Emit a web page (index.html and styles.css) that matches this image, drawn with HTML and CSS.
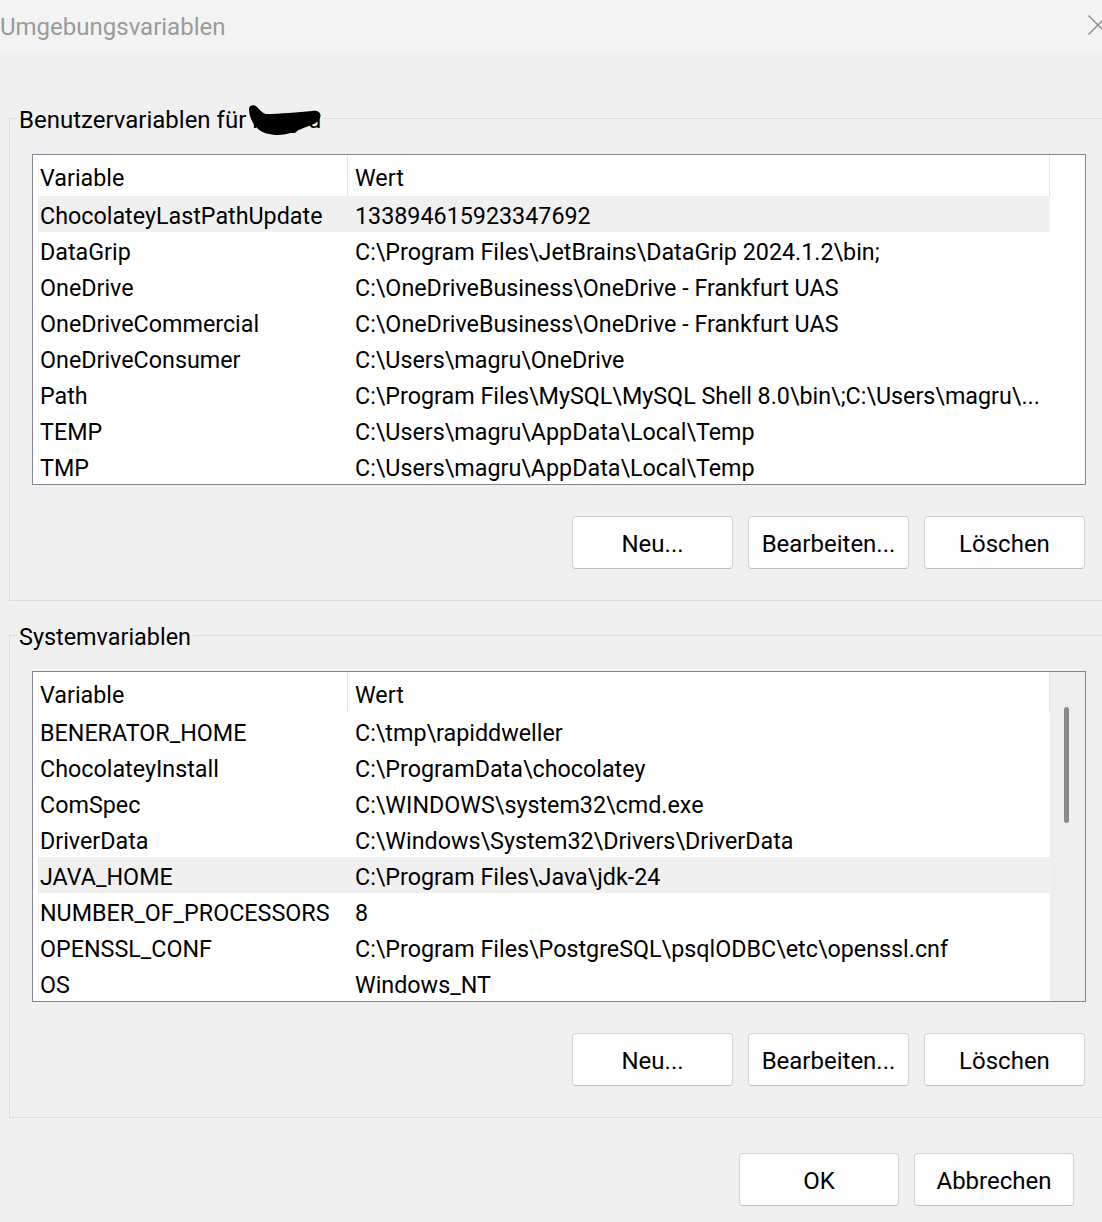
FILE: index.html
```html
<!DOCTYPE html>
<html lang="de">
<head>
<meta charset="utf-8">
<title>Umgebungsvariablen</title>
<link rel="stylesheet" href="styles.css">
</head>
<body>
<div class="window">
  <header class="titlebar">
    <span class="title">Umgebungsvariablen</span>
    <svg class="close" viewBox="0 0 20 20" aria-hidden="true"><path d="M0.5 0.5 L19.5 19.5 M19.5 0.5 L0.5 19.5" /></svg>
  </header>

  <main class="content">
    <fieldset class="group">
      <legend class="group-label">Benutzervariablen für <span class="user">magru</span><svg class="redact" viewBox="0 0 76 32" aria-hidden="true"><path d="M3 5 C3 1 8 0 11 3 C14 6 16 9 20 10 C34 10 52 8 66 7 C72 6 76 9 74 14 C72 19 66 21 60 23 C50 27 42 31 32 31 C24 31 16 29 11 24 C6 19 3 11 3 5 Z" /></svg></legend>
      <div class="list">
        <div class="list-main">
          <div class="list-head">
            <div class="hcell hcell-var">Variable</div>
            <div class="hcell hcell-val">Wert</div>
          </div>
          <div class="row is-selected"><span class="cell-var">ChocolateyLastPathUpdate</span><span class="cell-val">133894615923347692</span></div>
          <div class="row"><span class="cell-var">DataGrip</span><span class="cell-val">C:\Program Files\JetBrains\DataGrip 2024.1.2\bin;</span></div>
          <div class="row"><span class="cell-var">OneDrive</span><span class="cell-val">C:\OneDriveBusiness\OneDrive - Frankfurt UAS</span></div>
          <div class="row"><span class="cell-var">OneDriveCommercial</span><span class="cell-val">C:\OneDriveBusiness\OneDrive - Frankfurt UAS</span></div>
          <div class="row"><span class="cell-var">OneDriveConsumer</span><span class="cell-val">C:\Users\magru\OneDrive</span></div>
          <div class="row"><span class="cell-var">Path</span><span class="cell-val">C:\Program Files\MySQL\MySQL Shell 8.0\bin\;C:\Users\magru\...</span></div>
          <div class="row"><span class="cell-var">TEMP</span><span class="cell-val">C:\Users\magru\AppData\Local\Temp</span></div>
          <div class="row"><span class="cell-var">TMP</span><span class="cell-val">C:\Users\magru\AppData\Local\Temp</span></div>
        </div>
        <div class="list-scroll"></div>
      </div>
      <div class="actions">
        <button class="btn">Neu...</button>
        <button class="btn">Bearbeiten...</button>
        <button class="btn">Löschen</button>
      </div>
    </fieldset>

    <fieldset class="group group-system">
      <legend class="group-label">Systemvariablen</legend>
      <div class="list">
        <div class="list-main">
          <div class="list-head">
            <div class="hcell hcell-var">Variable</div>
            <div class="hcell hcell-val">Wert</div>
          </div>
          <div class="row"><span class="cell-var">BENERATOR_HOME</span><span class="cell-val">C:\tmp\rapiddweller</span></div>
          <div class="row"><span class="cell-var">ChocolateyInstall</span><span class="cell-val">C:\ProgramData\chocolatey</span></div>
          <div class="row"><span class="cell-var">ComSpec</span><span class="cell-val">C:\WINDOWS\system32\cmd.exe</span></div>
          <div class="row"><span class="cell-var">DriverData</span><span class="cell-val">C:\Windows\System32\Drivers\DriverData</span></div>
          <div class="row is-selected"><span class="cell-var">JAVA_HOME</span><span class="cell-val">C:\Program Files\Java\jdk-24</span></div>
          <div class="row"><span class="cell-var">NUMBER_OF_PROCESSORS</span><span class="cell-val">8</span></div>
          <div class="row"><span class="cell-var">OPENSSL_CONF</span><span class="cell-val">C:\Program Files\PostgreSQL\psqlODBC\etc\openssl.cnf</span></div>
          <div class="row"><span class="cell-var">OS</span><span class="cell-val">Windows_NT</span></div>
        </div>
        <div class="list-scroll list-scroll--track"><div class="thumb"></div></div>
      </div>
      <div class="actions">
        <button class="btn">Neu...</button>
        <button class="btn">Bearbeiten...</button>
        <button class="btn">Löschen</button>
      </div>
    </fieldset>

    <div class="dialog-actions">
      <button class="btn btn-dialog">OK</button>
      <button class="btn btn-dialog">Abbrechen</button>
    </div>
  </main>
</div>
</body>
</html>
```

FILE: styles.css
```css
html, body {
  margin: 0;
  padding: 0;
  overflow: hidden;
}

body {
  width: 1102px;
  height: 1222px;
  background: #f0f0f0;
  font-family: Roboto, "Liberation Sans", sans-serif;
  color: #000;
}

.titlebar {
  height: 53px;
  background: #f3f3f3;
  display: flex;
  justify-content: space-between;
  align-items: center;
}

.title {
  font-size: 24px;
  line-height: 28px;
  color: #9a9a9a;
}

.close {
  flex: none;
  width: 20px;
  height: 20px;
  align-self: flex-start;
  margin-top: 15px;
  margin-right: -6px;
  fill: none;
  stroke: #8a8a8a;
  stroke-width: 1.3;
}

.content {
  padding-top: 49px;
}

.group {
  margin: 0 -10px 0 9px;
  padding: 0 0 31px 0;
  border: 1px solid #dcdcdc;
  min-width: 0;
}

.group-system {
  margin-top: 18px;
}

.group-label {
  position: relative;
  margin-left: 7px;
  padding: 4px 2px 0;
  font-size: 24px;
  line-height: 28px;
  white-space: nowrap;
}

.group-system .group-label {
  font-size: 23.4px;
}

.redact {
  position: absolute;
  left: 229px;
  top: 2px;
  width: 76px;
  height: 32px;
  fill: #000;
}

.list {
  margin: 20px 0 0 22px;
  width: 1054px;
  box-sizing: border-box;
  border: 1px solid #848791;
  background: #fff;
  display: flex;
}

.list-main {
  width: 1017px;
  flex: none;
}

.list-scroll {
  flex: 1;
}

.list-scroll--track {
  background: #eeeeee;
  padding-top: 35px;
}

.thumb {
  width: 5px;
  height: 116px;
  margin-left: 14px;
  border-radius: 3px;
  background: #8a8a8a;
}

.list-head {
  display: flex;
  height: 41px;
}

.hcell {
  box-sizing: border-box;
  height: 41px;
  padding-top: 5px;
  line-height: 36px;
  font-size: 23.3px;
  padding-left: 7px;
  border-right: 1px solid #e5e5e5;
  white-space: nowrap;
}

.hcell-var {
  width: 315px;
}

.hcell-val {
  width: 702px;
}

.row {
  display: flex;
  box-sizing: border-box;
  width: 1012px;
  height: 36px;
  margin-left: 5px;
  padding-top: 4px;
  line-height: 32px;
  font-size: 23.3px;
  white-space: nowrap;
  overflow: hidden;
}

.row.is-selected {
  background: #f0f0f0;
}

.cell-var {
  flex: none;
  width: 309px;
  box-sizing: border-box;
  padding-left: 2px;
}

.cell-val {
  padding-left: 8px;
}

.actions {
  display: flex;
  justify-content: flex-end;
  gap: 15px;
  margin: 31px 0 0 22px;
  width: 1053px;
}

.btn {
  width: 161px;
  height: 53px;
  box-sizing: border-box;
  border: 1px solid #d2d2d2;
  border-bottom-color: #bdbdbd;
  border-radius: 4px;
  background: #fdfdfd;
  font-family: Roboto, "Liberation Sans", sans-serif;
  font-size: 24px;
  color: #000;
  padding: 2px 0 0;
}

.dialog-actions {
  display: flex;
  justify-content: flex-end;
  gap: 15px;
  margin-top: 35px;
  padding-right: 28px;
}

.btn-dialog {
  width: 160px;
}
```
